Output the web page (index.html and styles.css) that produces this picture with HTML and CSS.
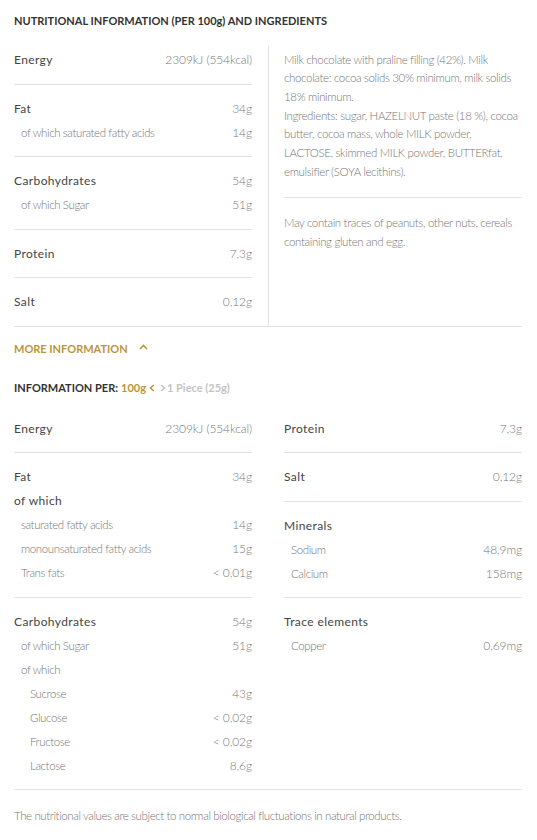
FILE: index.html
```html
<!DOCTYPE html>
<html lang="en">
<head>
<meta charset="utf-8">
<title>Nutritional information</title>
<link rel="stylesheet" href="styles.css">
</head>
<body>
<main class="page">
  <h2 class="title">NUTRITIONAL INFORMATION (PER 100g) AND INGREDIENTS</h2>

  <section class="summary">
    <div class="table">
      <div class="group">
        <div class="row main"><span>Energy</span><span class="val">2309kJ (554kcal)</span></div>
      </div>
      <div class="group">
        <div class="row main"><span>Fat</span><span class="val">34g</span></div>
        <div class="row sub"><span>of which saturated fatty acids</span><span class="val">14g</span></div>
      </div>
      <div class="group">
        <div class="row main"><span>Carbohydrates</span><span class="val">54g</span></div>
        <div class="row sub"><span>of which Sugar</span><span class="val">51g</span></div>
      </div>
      <div class="group">
        <div class="row main"><span>Protein</span><span class="val">7,3g</span></div>
      </div>
      <div class="group">
        <div class="row main"><span>Salt</span><span class="val">0,12g</span></div>
      </div>
    </div>
    <div class="ingredients">
      <p class="text">Milk chocolate with praline filling (42%). Milk<br>chocolate: cocoa solids 30% minimum, milk solids<br>18% minimum.<br>Ingredients: sugar, HAZELNUT paste (18 %), cocoa<br>butter, cocoa mass, whole MILK powder,<br>LACTOSE, skimmed MILK powder, BUTTERfat,<br>emulsifier (SOYA lecithins).</p>
      <p class="text">May contain traces of peanuts, other nuts, cereals<br>containing gluten and egg.</p>
    </div>
  </section>

  <button class="more" type="button">MORE INFORMATION
    <svg class="chev" width="9" height="6" viewBox="0 0 9 6" aria-hidden="true"><polyline points="1,5 4.5,1.5 8,5" fill="none" stroke="currentColor" stroke-width="1.6"/></svg>
  </button>

  <div class="per">
    <span class="per-label">INFORMATION PER:</span>
    <span class="gold">100g</span>
    <svg class="arrow gold" width="6" height="8" viewBox="0 0 6 8" aria-hidden="true"><polyline points="4.8,1 1.5,4 4.8,7" fill="none" stroke="currentColor" stroke-width="1.6"/></svg>
    <span class="off"><svg class="arrow" width="6" height="8" viewBox="0 0 6 8" aria-hidden="true"><polyline points="1.2,1 4.5,4 1.2,7" fill="none" stroke="currentColor" stroke-width="1.6"/></svg>1 Piece (25g)</span>
  </div>

  <section class="details">
    <div class="table">
      <div class="group">
        <div class="row main"><span>Energy</span><span class="val">2309kJ (554kcal)</span></div>
      </div>
      <div class="group">
        <div class="row main"><span>Fat</span><span class="val">34g</span></div>
        <div class="row main"><span>of which</span></div>
        <div class="row sub"><span>saturated fatty acids</span><span class="val">14g</span></div>
        <div class="row sub"><span>monounsaturated fatty acids</span><span class="val">15g</span></div>
        <div class="row sub"><span>Trans fats</span><span class="val">&lt; 0,01g</span></div>
      </div>
      <div class="group">
        <div class="row main"><span>Carbohydrates</span><span class="val">54g</span></div>
        <div class="row sub"><span>of which Sugar</span><span class="val">51g</span></div>
        <div class="row sub"><span>of which</span></div>
        <div class="row subsub"><span>Sucrose</span><span class="val">43g</span></div>
        <div class="row subsub"><span>Glucose</span><span class="val">&lt; 0,02g</span></div>
        <div class="row subsub"><span>Fructose</span><span class="val">&lt; 0,02g</span></div>
        <div class="row subsub"><span>Lactose</span><span class="val">8,6g</span></div>
      </div>
    </div>
    <div class="table">
      <div class="group">
        <div class="row main"><span>Protein</span><span class="val">7,3g</span></div>
      </div>
      <div class="group">
        <div class="row main"><span>Salt</span><span class="val">0,12g</span></div>
      </div>
      <div class="group">
        <div class="row main"><span>Minerals</span></div>
        <div class="row sub"><span>Sodium</span><span class="val">48,9mg</span></div>
        <div class="row sub"><span>Calcium</span><span class="val">158mg</span></div>
      </div>
      <div class="group">
        <div class="row main"><span>Trace elements</span></div>
        <div class="row sub"><span>Copper</span><span class="val">0,69mg</span></div>
      </div>
    </div>
  </section>

  <p class="note">The nutritional values are subject to normal biological fluctuations in natural products.</p>
</main>
</body>
</html>
```

FILE: styles.css
```css
* { box-sizing: border-box; }

html, body {
  margin: 0;
  background: #fff;
}

body {
  font-family: Lato, "Noto Sans", sans-serif;
  color: #777;
  font-weight: 300;
  font-size: 11.5px;
}

.page {
  padding: 13px 15px 20px 14px;
}

.title {
  margin: 0 0 7px;
  font-size: 11px;
  line-height: 16px;
  font-weight: 700;
  color: #333;
  letter-spacing: 0;
}

/* summary block */
.summary {
  display: grid;
  grid-template-columns: 1fr 1fr;
  border-bottom: 1px solid #e2e2e2;
}

.summary > .table {
  padding-right: 16px;
}

.ingredients {
  margin-top: 10px;
  border-left: 1px solid #e2e2e2;
  padding-left: 15px;
}

.text {
  margin: 0;
  line-height: 18.7px;
  letter-spacing: -0.35px;
  white-space: nowrap;
  color: #777;
}

.text:first-child {
  padding: 4.5px 0 15.5px;
  border-bottom: 1px solid #e2e2e2;
}

.text + .text {
  padding-top: 16.5px;
}

/* tables */
.group {
  padding: 11.5px 0 12px;
  border-bottom: 1px solid #e2e2e2;
}

.group:last-child {
  border-bottom: none;
}

.row {
  display: flex;
  justify-content: space-between;
  align-items: center;
  height: 24px;
  letter-spacing: -0.4px;
}

.row.main {
  color: #444;
  font-size: 12px;
  font-weight: 400;
  letter-spacing: 0.4px;
}

.row.sub {
  padding-left: 7px;
}

.row.subsub {
  padding-left: 16px;
}

.val {
  color: #777;
  font-size: 12px;
  font-weight: 300;
  letter-spacing: -0.1px;
}

/* more info */
.more {
  display: flex;
  align-items: center;
  gap: 11px;
  margin: 14px 0 0;
  padding: 0;
  border: 0;
  background: none;
  font-family: inherit;
  font-size: 11px;
  line-height: 16px;
  font-weight: 700;
  color: #bb953c;
  letter-spacing: 0;
}

.chev {
  margin-top: -3px;
}

.per {
  display: flex;
  align-items: center;
  margin-top: 23px;
  font-size: 11px;
  line-height: 16px;
  font-weight: 700;
  color: #333;
  letter-spacing: 0;
}

.per-label { margin-right: 3px; }

.gold { color: #bb953c; }
.off {
  display: inline-flex;
  align-items: center;
  color: #c4c4c4;
}

.per > .arrow {
  margin: 0 5px 0 3px;
}

.off .arrow {
  margin-right: 1px;
}

/* details */
.details {
  display: grid;
  grid-template-columns: 1fr 1fr;
  column-gap: 32px;
  margin-top: 9px;
  border-bottom: 1px solid #e2e2e2;
}

.note {
  margin: 18px 0 0;
  line-height: 16px;
  letter-spacing: -0.4px;
  color: #777;
}
```
